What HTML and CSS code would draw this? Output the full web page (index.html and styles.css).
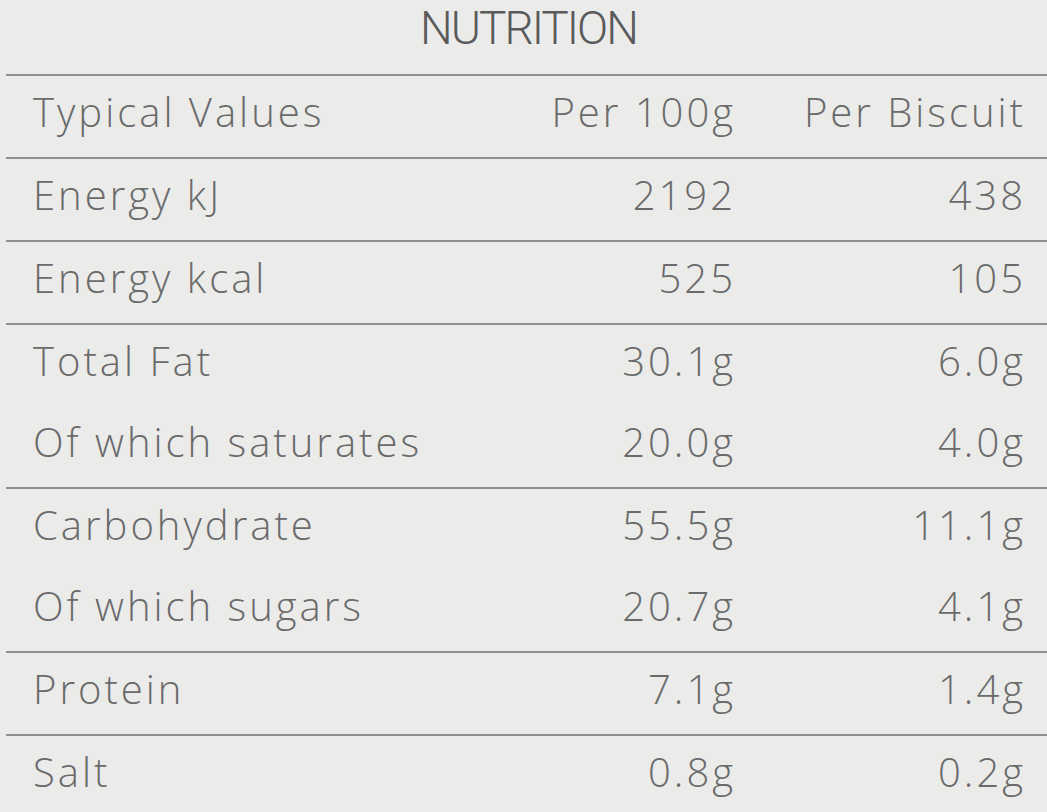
FILE: index.html
```html
<!DOCTYPE html>
<html>
<head>
<meta charset="utf-8">
<link rel="stylesheet" href="styles.css">
</head>
<body>
<div class="label">
  <h1 class="title">NUTRITION</h1>
  <div class="table">
    <div class="group">
      <div class="row"><span class="name">Typical Values</span><span class="val">Per 100g</span><span class="val">Per Biscuit</span></div>
    </div>
    <div class="group">
      <div class="row"><span class="name">Energy kJ</span><span class="val">2192</span><span class="val">438</span></div>
    </div>
    <div class="group">
      <div class="row"><span class="name">Energy kcal</span><span class="val">525</span><span class="val">105</span></div>
    </div>
    <div class="group">
      <div class="row"><span class="name">Total Fat</span><span class="val">30.1g</span><span class="val">6.0g</span></div>
      <div class="row"><span class="name">Of which saturates</span><span class="val">20.0g</span><span class="val">4.0g</span></div>
    </div>
    <div class="group">
      <div class="row"><span class="name">Carbohydrate</span><span class="val">55.5g</span><span class="val">11.1g</span></div>
      <div class="row"><span class="name">Of which sugars</span><span class="val">20.7g</span><span class="val">4.1g</span></div>
    </div>
    <div class="group">
      <div class="row"><span class="name">Protein</span><span class="val">7.1g</span><span class="val">1.4g</span></div>
    </div>
    <div class="group">
      <div class="row"><span class="name">Salt</span><span class="val">0.8g</span><span class="val">0.2g</span></div>
    </div>
  </div>
</div>
</body>
</html>
```
FILE: styles.css
```css
html, body {
  margin: 0;
  padding: 0;
  background: #ebebea;
  overflow: hidden;
}
.label {
  width: 1047px;
  height: 812px;
  background: #ebebea;
}
.title {
  margin: 0;
  height: 74px;
  box-sizing: border-box;
  padding-top: 3px;
  padding-left: 10px;
  text-align: center;
  font-family: Roboto, "Liberation Sans", sans-serif;
  font-weight: 300;
  font-size: 46px;
  line-height: 50px;
  letter-spacing: -2px;
  color: #5a5a5a;
}
.table {
  margin-left: 6px;
}
.group {
  border-top: 2px solid #8e8e8c;
}
.row {
  display: grid;
  grid-template-columns: 1fr 200px 290px;
  height: 81px;
  box-sizing: border-box;
  padding: 0 21px 0 27px;
  font-family: "Open Sans", sans-serif;
  font-weight: 300;
  font-size: 40px;
  line-height: 72px;
  letter-spacing: 3px;
  color: #6a6a6a;
}
.val {
  text-align: right;
}
```
